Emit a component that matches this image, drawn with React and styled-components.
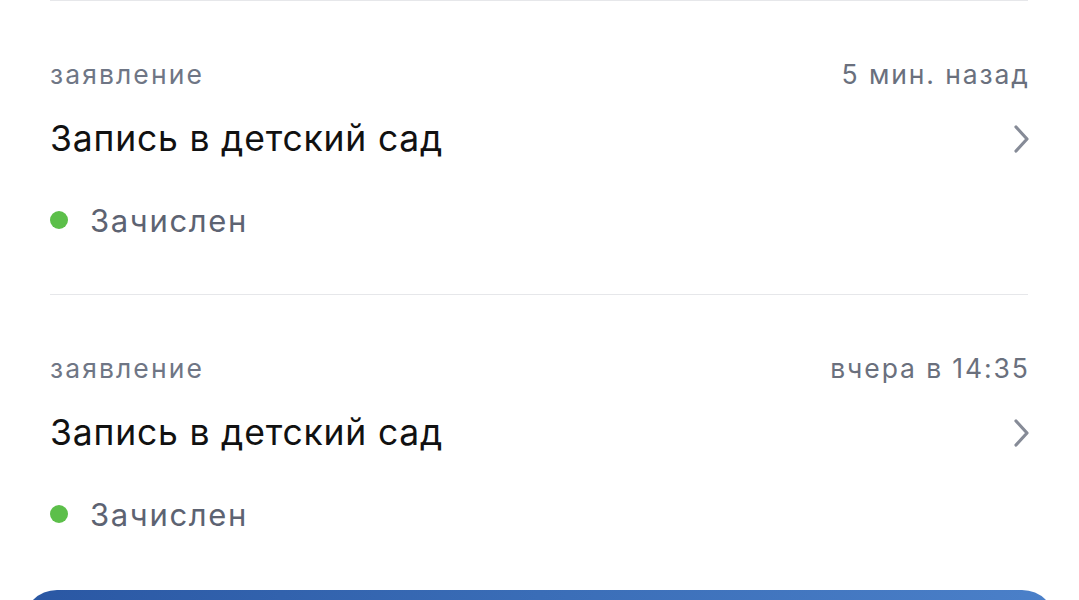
import React from 'react';
import styled, { createGlobalStyle } from 'styled-components';

const GlobalStyle = createGlobalStyle`
  body {
    margin: 0;
    background: #fff;
    font-family: Inter, Roboto, "Noto Sans", sans-serif;
    -webkit-font-smoothing: antialiased;
  }
`

const Page = styled.div`
  display: flex;
  flex-direction: column;
  height: 600px;
  overflow: hidden;
`

const List = styled.div`
  display: flex;
  flex-direction: column;
  padding: 0 51px 0 50px;
`

const Item = styled.div`
  display: flex;
  flex-direction: column;
  height: 294px;
  box-sizing: border-box;
  padding-top: 58px;
  border-top: 1px solid #e6e7ea;
`

const Row = styled.div`
  display: flex;
  justify-content: space-between;
  align-items: center;
`

const Kind = styled.span`
  font-size: 26.5px;
  line-height: 30px;
  color: #6f7685;
  letter-spacing: 2.1px;
`

const Time = styled(Kind)`
  color: #6a707d;
  letter-spacing: 1.9px;
  margin-right: -1.9px;
`

const Title = styled(Row)`
  margin-top: 30px;
  height: 40px;
  font-size: 35.5px;
  line-height: 40px;
  letter-spacing: 0.8px;
  color: #111;
`

const Status = styled.div`
  display: flex;
  align-items: center;
  margin-top: 43px;
  height: 36px;
  font-size: 31px;
  letter-spacing: 1.65px;
  color: #5d6372;
`

const Dot = styled.span`
  width: 18px;
  height: 18px;
  border-radius: 50%;
  background: ${props => props.color};
  margin-right: 22px;
`

const Chevron = styled.svg`
  width: 16px;
  height: 28px;
  margin-right: -1px;
`

const Banner = styled.div`
  flex: none;
  height: 120px;
  margin: 2px 23px 0;
  border-radius: 34px;
  background: linear-gradient(90deg, #2a57a3 0%, #3a6db7 50%, #4b80c9 100%);
`

const items = [
  { kind: 'заявление', time: '5 мин. назад', title: 'Запись в детский сад', status: 'Зачислен' },
  { kind: 'заявление', time: 'вчера в 14:35', title: 'Запись в детский сад', status: 'Зачислен' },
];

const App = () => (
  <Page>
    <GlobalStyle />
    <List>
      {items.map((item, i) => (
        <Item key={i}>
          <Row>
            <Kind>{item.kind}</Kind>
            <Time>{item.time}</Time>
          </Row>
          <Title>
            <span>{item.title}</span>
            <Chevron viewBox="0 0 16 28" fill="none">
              <polyline points="3,2 14,14 3,26" stroke="#868b97" strokeWidth="3.2" strokeLinecap="round" strokeLinejoin="round" />
            </Chevron>
          </Title>
          <Status>
            <Dot color="#5cbf4a" />
            {item.status}
          </Status>
        </Item>
      ))}
    </List>
    <Banner />
  </Page>
);

export default App;
